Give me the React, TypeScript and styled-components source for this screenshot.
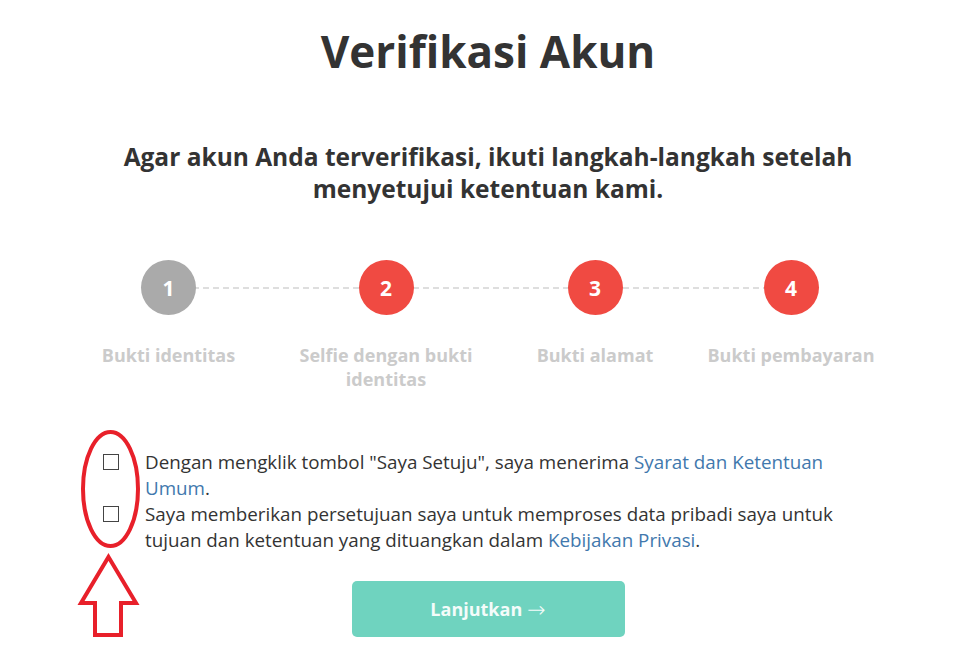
import React from "react";
import styled, { createGlobalStyle } from "styled-components";

const Global = createGlobalStyle`
  html, body { margin: 0; padding: 0; background: #fff; }
  body { font-family: "Open Sans", "Liberation Sans", sans-serif; color: #333; }
`;

const Page = styled.div`
  position: relative;
  width: 976px;
  min-height: 670px;
  display: flex;
  flex-direction: column;
  align-items: center;
`;

const Title = styled.h1`
  margin: 23px 0 0;
  font-size: 44px;
  line-height: 56px;
  font-weight: 700;
  color: #333;
  text-align: center;
`;

const Subtitle = styled.h2`
  margin: 62px 0 0;
  width: 800px;
  font-size: 24.5px;
  line-height: 32px;
  font-weight: 700;
  color: #333;
  text-align: center;
`;

const Steps = styled.div`
  position: relative;
  margin-top: 55px;
  display: flex;
  gap: 57px;
  justify-content: center;
`;

const DashLine = styled.div`
  position: absolute;
  top: 27px;
  left: 70px;
  right: 80px;
  height: 2px;
  background-image: repeating-linear-gradient(
    to right,
    #dedede 0 6px,
    transparent 6px 10px
  );
`;

const Step = styled.div<{ $w: number }>`
  position: relative;
  width: ${(p) => p.$w}px;
  display: flex;
  flex-direction: column;
  align-items: center;
`;

const Circle = styled.div<{ $active: boolean }>`
  width: 55px;
  height: 55px;
  border-radius: 50%;
  background: ${(p) => (p.$active ? "#aaaaaa" : "#f04a42")};
  color: #fff;
  font-size: 21px;
  font-weight: 700;
  display: flex;
  align-items: center;
  justify-content: center;
`;

const StepLabel = styled.div<{ $wrap: boolean }>`
  margin-top: 28px;
  font-size: 18px;
  line-height: 24px;
  font-weight: 700;
  color: #cbcbcb;
  text-align: center;
  white-space: ${(p) => (p.$wrap ? "normal" : "nowrap")};
`;

const Terms = styled.div`
  margin-top: 58px;
  width: 770px;
  display: flex;
  flex-direction: column;
`;

const TermRow = styled.label`
  display: flex;
  align-items: flex-start;
  gap: 26px;
  font-size: 18.8px;
  line-height: 26px;
  color: #333;
`;

const Box = styled.span`
  flex: none;
  margin-top: 5px;
  width: 14px;
  height: 14px;
  border: 1px solid #444;
  background: #fff;
`;

const Link = styled.a`
  color: #4178ad;
  text-decoration: none;
`;

const Button = styled.button`
  margin-top: 28px;
  width: 273px;
  height: 56px;
  border: none;
  border-radius: 5px;
  background: #6fd3bf;
  color: #f4fcfa;
  font-family: "Open Sans", "Liberation Sans", sans-serif;
  font-size: 18px;
  font-weight: 700;
  cursor: pointer;
  display: flex;
  align-items: center;
  justify-content: center;
`;

const Arrow = styled.span`
  font-family: "DejaVu Sans", sans-serif;
  font-weight: 200;
  font-size: 22px;
  line-height: 1;
  margin-left: 5px;
  margin-top: 1px;
`;

const Annotation = styled.svg`
  position: absolute;
  left: 0;
  top: 0;
  pointer-events: none;
`;

const steps = [
  { n: 1, label: "Bukti identitas", w: 131, active: true, wrap: false },
  { n: 2, label: "Selfie dengan bukti identitas", w: 190, active: false, wrap: true },
  { n: 3, label: "Bukti alamat", w: 114, active: false, wrap: false },
  { n: 4, label: "Bukti pembayaran", w: 164, active: false, wrap: false },
];

export default function App() {
  return (
    <>
      <Global />
      <Page>
        <Title>Verifikasi Akun</Title>
        <Subtitle>
          Agar akun Anda terverifikasi, ikuti langkah-langkah setelah
          <br />
          menyetujui ketentuan kami.
        </Subtitle>
        <Steps>
          <DashLine />
          {steps.map((s) => (
            <Step key={s.n} $w={s.w}>
              <Circle $active={s.active}>{s.n}</Circle>
              <StepLabel $wrap={s.wrap}>{s.label}</StepLabel>
            </Step>
          ))}
        </Steps>
        <Terms>
          <TermRow>
            <Box />
            <span>
              Dengan mengklik tombol "Saya Setuju", saya menerima{" "}
              <Link href="#">Syarat dan Ketentuan Umum</Link>.
            </span>
          </TermRow>
          <TermRow>
            <Box />
            <span>
              Saya memberikan persetujuan saya untuk memproses data pribadi saya
              untuk tujuan dan ketentuan yang dituangkan dalam{" "}
              <Link href="#">Kebijakan Privasi</Link>.
            </span>
          </TermRow>
        </Terms>
        <Button>
          Lanjutkan<Arrow>→</Arrow>
        </Button>
        <Annotation width="976" height="670" viewBox="0 0 976 670">
          <ellipse
            cx="110.5"
            cy="489"
            rx="27.5"
            ry="57"
            fill="none"
            stroke="#e8202a"
            strokeWidth="4"
          />
          <path
            d="M108.5 557 L136 603 L121 603 L121 635 L95 635 L95 603 L81 603 Z"
            fill="none"
            stroke="#e8202a"
            strokeWidth="4"
            strokeLinejoin="miter"
          />
        </Annotation>
      </Page>
    </>
  );
}
